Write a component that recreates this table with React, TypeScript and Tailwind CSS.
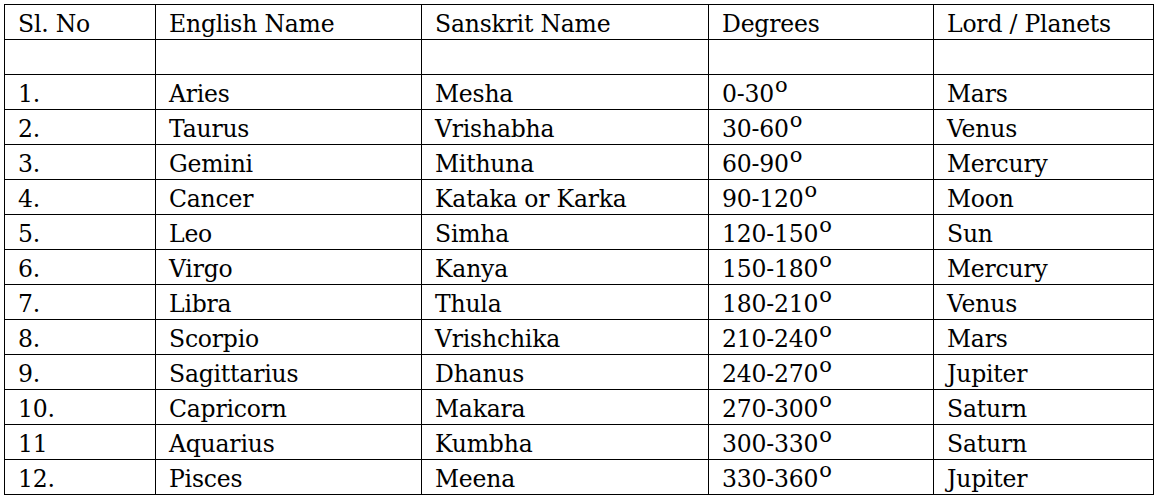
import React from "react";

const rows: [string, string, string, string, string][] = [
  ["1.", "Aries", "Mesha", "0-30", "Mars"],
  ["2.", "Taurus", "Vrishabha", "30-60", "Venus"],
  ["3.", "Gemini", "Mithuna", "60-90", "Mercury"],
  ["4.", "Cancer", "Kataka or Karka", "90-120", "Moon"],
  ["5.", "Leo", "Simha", "120-150", "Sun"],
  ["6.", "Virgo", "Kanya", "150-180", "Mercury"],
  ["7.", "Libra", "Thula", "180-210", "Venus"],
  ["8.", "Scorpio", "Vrishchika", "210-240", "Mars"],
  ["9.", "Sagittarius", "Dhanus", "240-270", "Jupiter"],
  ["10.", "Capricorn", "Makara", "270-300", "Saturn"],
  ["11", "Aquarius", "Kumbha", "300-330", "Saturn"],
  ["12.", "Pisces", "Meena", "330-360", "Jupiter"],
];

const cell =
  "h-[35px] border-r border-b border-black pl-[13px] pt-[4px] leading-[30px] whitespace-nowrap";

export default function App() {
  return (
    <div className="w-[1158px] h-[498px] bg-white pt-[4px] pl-[4px]" style={{ fontFamily: '"DejaVu Serif", serif' }}>
      <div className="grid grid-cols-[151px_266px_287px_225px_220px] w-max border-l border-t border-black text-[23.5px] tracking-[-0.2px] text-black">
        {["Sl. No", "English Name", "Sanskrit Name", "Degrees", "Lord / Planets"].map((h) => (
          <div key={h} className={cell}>{h}</div>
        ))}
        {[0, 1, 2, 3, 4].map((i) => (
          <div key={"e" + i} className={cell}></div>
        ))}
        {rows.map((r) => (
          <React.Fragment key={r[0]}>
            <div className={cell}>{r[0]}</div>
            <div className={cell}>{r[1]}</div>
            <div className={cell}>{r[2]}</div>
            <div className={cell}>
              {r[3]}
              <span className="inline-block align-top text-[21px] leading-[21px] relative top-[-4px] ml-[1px]">o</span>
            </div>
            <div className={cell}>{r[4]}</div>
          </React.Fragment>
        ))}
      </div>
    </div>
  );
}
